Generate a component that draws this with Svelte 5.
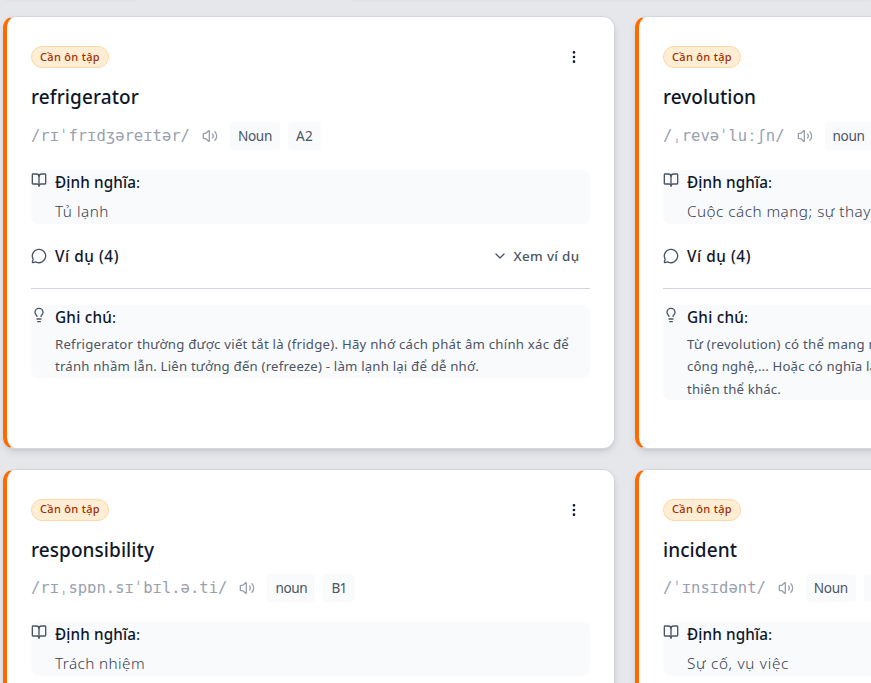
<script>
  const cards = [
    {
      word: 'refrigerator', ipa: '/rɪˈfrɪdʒəreɪtər/', tags: [['Noun', 50], ['A2', 33]], meaning: 'Tủ lạnh',
      wordWidth: 108, meaningWidth: 54,
      note: [['Refrigerator thường được viết tắt là (fridge). Hãy nhớ cách phát âm chính xác để', 514], ['tránh nhầm lẫn. Liên tưởng đến (refreeze) - làm lạnh lại để dễ nhớ.', 424]]
    },
    {
      word: 'revolution', ipa: '/ˌrevəˈluːʃn/', tags: [['noun', 48], ['B1', 31]], meaning: 'Cuộc cách mạng; sự thay đổi lớn',
      wordWidth: 93, meaningWidth: 239,
      note: [['Từ (revolution) có thể mang nghĩa là cuộc cách mạng trong chính trị, xã hội,', 487], ['công nghệ,... Hoặc có nghĩa là sự quay vòng của một thiên thể quanh một', 468], ['thiên thể khác.', 94]]
    },
    {
      word: 'responsibility', ipa: '/rɪˌspɒn.sɪˈbɪl.ə.ti/', tags: [['noun', 48], ['B1', 31]], meaning: 'Trách nhiệm',
      wordWidth: 123, meaningWidth: 90, note: []
    },
    {
      word: 'incident', ipa: '/ˈɪnsɪdənt/', tags: [['Noun', 50], ['B2', 33]], meaning: 'Sự cố, vụ việc',
      wordWidth: 74, meaningWidth: 102, note: []
    }
  ];

  // Spreads tracking evenly so a line of text spans the requested width.
  function fit(node, width) {
    const range = document.createRange();
    range.selectNodeContents(node);
    const natural = range.getBoundingClientRect().width;
    node.style.letterSpacing = (width - natural) / [...node.textContent].length + 'px';
  }
</script>

{#snippet icon(name, size = 16)}
  <svg class="icon" width={size} height={size} viewBox="0 0 24 24">
    {#if name === 'book'}
      <path d="M12 7v14" /><path d="M3 18a1 1 0 0 1-1-1V4a1 1 0 0 1 1-1h5a4 4 0 0 1 4 4 4 4 0 0 1 4-4h5a1 1 0 0 1 1 1v13a1 1 0 0 1-1 1h-6a3 3 0 0 0-3 3 3 3 0 0 0-3-3z" />
    {:else if name === 'message'}
      <path d="M2.992 16.342a2 2 0 0 1 .094 1.167l-1.065 3.29a1 1 0 0 0 1.236 1.168l3.413-.998a2 2 0 0 1 1.099.092 10 10 0 1 0-4.777-4.719" />
    {:else if name === 'bulb'}
      <path d="M15 14c.2-1 .7-1.7 1.5-2.5 1-.9 1.5-2.2 1.5-3.5A6 6 0 0 0 6 8c0 1 .2 2.2 1.5 3.5.7.7 1.3 1.5 1.5 2.5" /><path d="M9 18h6" /><path d="M10 22h4" />
    {:else if name === 'sound'}
      <path d="M11 4.702a.705.705 0 0 0-1.203-.498L6.413 7.587A1.4 1.4 0 0 1 5.416 8H3a1 1 0 0 0-1 1v6a1 1 0 0 0 1 1h2.416a1.4 1.4 0 0 1 .997.413l3.383 3.384A.705.705 0 0 0 11 19.298z" /><path d="M16 9a5 5 0 0 1 0 6" /><path d="M19.364 18.364a9 9 0 0 0 0-12.728" />
    {:else if name === 'chevron'}
      <path d="m6 9 6 6 6-6" />
    {:else}
      <circle cx="12" cy="12" r="1" /><circle cx="12" cy="5" r="1" /><circle cx="12" cy="19" r="1" />
    {/if}
  </svg>
{/snippet}

<main>
  <div class="toolbar"><span class="short"></span><span class="long"></span></div>
  <div class="grid">
    {#each cards as card}
      <article>
        <header>
          <span class="badge"><span use:fit={60}>Cần ôn tập</span></span>
          <button aria-label="Menu">{@render icon('more')}</button>
        </header>
        <h2><span use:fit={card.wordWidth}>{card.word}</span></h2>
        <div class="pron">
          <span class="ipa">{card.ipa}</span>
          <span class="sound">{@render icon('sound')}</span>
          {#each card.tags as [label, width]}
            <span class="tag"><span use:fit={width - 16}>{label}</span></span>
          {/each}
        </div>
        <section class="panel">
          {@render icon('book')}
          <div class="body">
            <h3><span use:fit={81}>Định nghĩa</span><i>:</i></h3>
            <p class="meaning"><span use:fit={card.meaningWidth}>{card.meaning}</span></p>
          </div>
        </section>
        <div class="examples">
          {@render icon('message')}
          <h3><span use:fit={64}>Ví dụ (4)</span></h3>
          <button class="toggle">{@render icon('chevron')}<span use:fit={66}>Xem ví dụ</span></button>
        </div>
        <section class="panel note">
          {@render icon('bulb')}
          <div class="body">
            <h3><span use:fit={57}>Ghi chú</span><i>:</i></h3>
            {#each card.note as [line, width]}
              <p><span use:fit={width}>{line}</span></p>
            {/each}
          </div>
        </section>
      </article>
    {/each}
  </div>
</main>

<style>
  :global(body) { background: #e5e7eb; overflow: hidden; }
  main {
    height: 683px;
    overflow: hidden;
    font-family: "Noto Sans", "Open Sans", sans-serif;
    color: #0f172a;
  }
  * { box-sizing: border-box; }
  h2, h3, p { margin: 0; font-weight: 500; white-space: nowrap; }
  button { padding: 0; border: 0; background: none; color: inherit; font: inherit; }
  .icon { display: block; flex: none; fill: none; stroke: currentColor; stroke-width: 2; stroke-linecap: round; stroke-linejoin: round; }
  .toolbar { display: flex; justify-content: space-between; height: 16px; width: 871px; padding: 0 0 0 4px; }
  .toolbar span { height: 8px; margin-top: -11px; box-shadow: 0 2px 4px rgb(0 0 0 / 7%); }
  .short { width: 133px; }
  .long { width: 521px; }
  .grid {
    display: grid;
    grid-template-columns: 611.5px 611.5px;
    grid-auto-rows: 432.5px;
    gap: 20px 20.5px;
    width: 1244px;
    padding-left: 3px;
  }
  article {
    display: flex;
    flex-direction: column;
    min-width: 0;
    padding: 24px;
    border: 1px solid #d1d5dc;
    border-left: 4px solid #ff6900;
    border-radius: 12px;
    background: #fff;
    box-shadow: 0 4px 8px -1px rgb(0 0 0 / 10%), 0 2px 4px -2px rgb(0 0 0 / 10%);
  }
  header { display: flex; align-items: center; justify-content: space-between; height: 32px; }
  header button { padding: 0 8px; color: #0f172a; }
  .badge {
    display: flex;
    align-items: center;
    height: 22px;
    width: 78px;
    padding: 0 0 2px 8px;
    border: 1px solid #ffd6a8;
    border-radius: 11px;
    background: #ffedd4;
    color: #9f2d00;
    font-size: 11px;
    font-weight: 500;
    white-space: nowrap;
  }
  h2 { margin-top: 10px; font-size: 19px; line-height: 28px; }
  .pron { display: flex; align-items: center; height: 28px; margin-top: 10.7px; }
  .ipa { color: #99a1af; font: 15.54px/24px "DejaVu Sans Mono", monospace; white-space: nowrap; }
  .sound { margin: 0 12px; color: #99a1af; }
  .tag {
    height: 28px;
    margin-right: 8px;
    padding: 0 8px;
    border-radius: 4px;
    background: #f9fafb;
    color: #4a5565;
    font-size: 13.6px;
    line-height: 28px;
    white-space: nowrap;
  }
  .panel {
    display: flex;
    gap: 8px;
    height: 54px;
    margin-top: 20px;
    padding-top: 2px;
    border-radius: 8px;
    background: #f9fafb;
    color: #4a5565;
  }
  h3 { color: #0f172a; font-size: 15.3px; line-height: 22px; }
  .panel h3 { line-height: 20px; margin-bottom: 2px; }
  h3 i { font-style: normal; font-weight: 400; }
  .meaning { margin-top: 7px; color: #364153; font-size: 15.3px; font-weight: 350; line-height: 24px; }
  .examples { display: flex; align-items: center; gap: 8px; height: 65px; border-bottom: 1px solid #d1d5dc; color: #4a5565; }
  .toggle { display: flex; align-items: center; gap: 6px; margin: 0 10px 0 auto; font-size: 13.4px; font-weight: 500; line-height: 20px; white-space: nowrap; }
  .note { height: auto; margin-top: 16px; }
  .note p { font-size: 13.2px; font-weight: 400; line-height: 22.5px; }
  .panel.note h3 { margin-bottom: 6px; }
</style>
